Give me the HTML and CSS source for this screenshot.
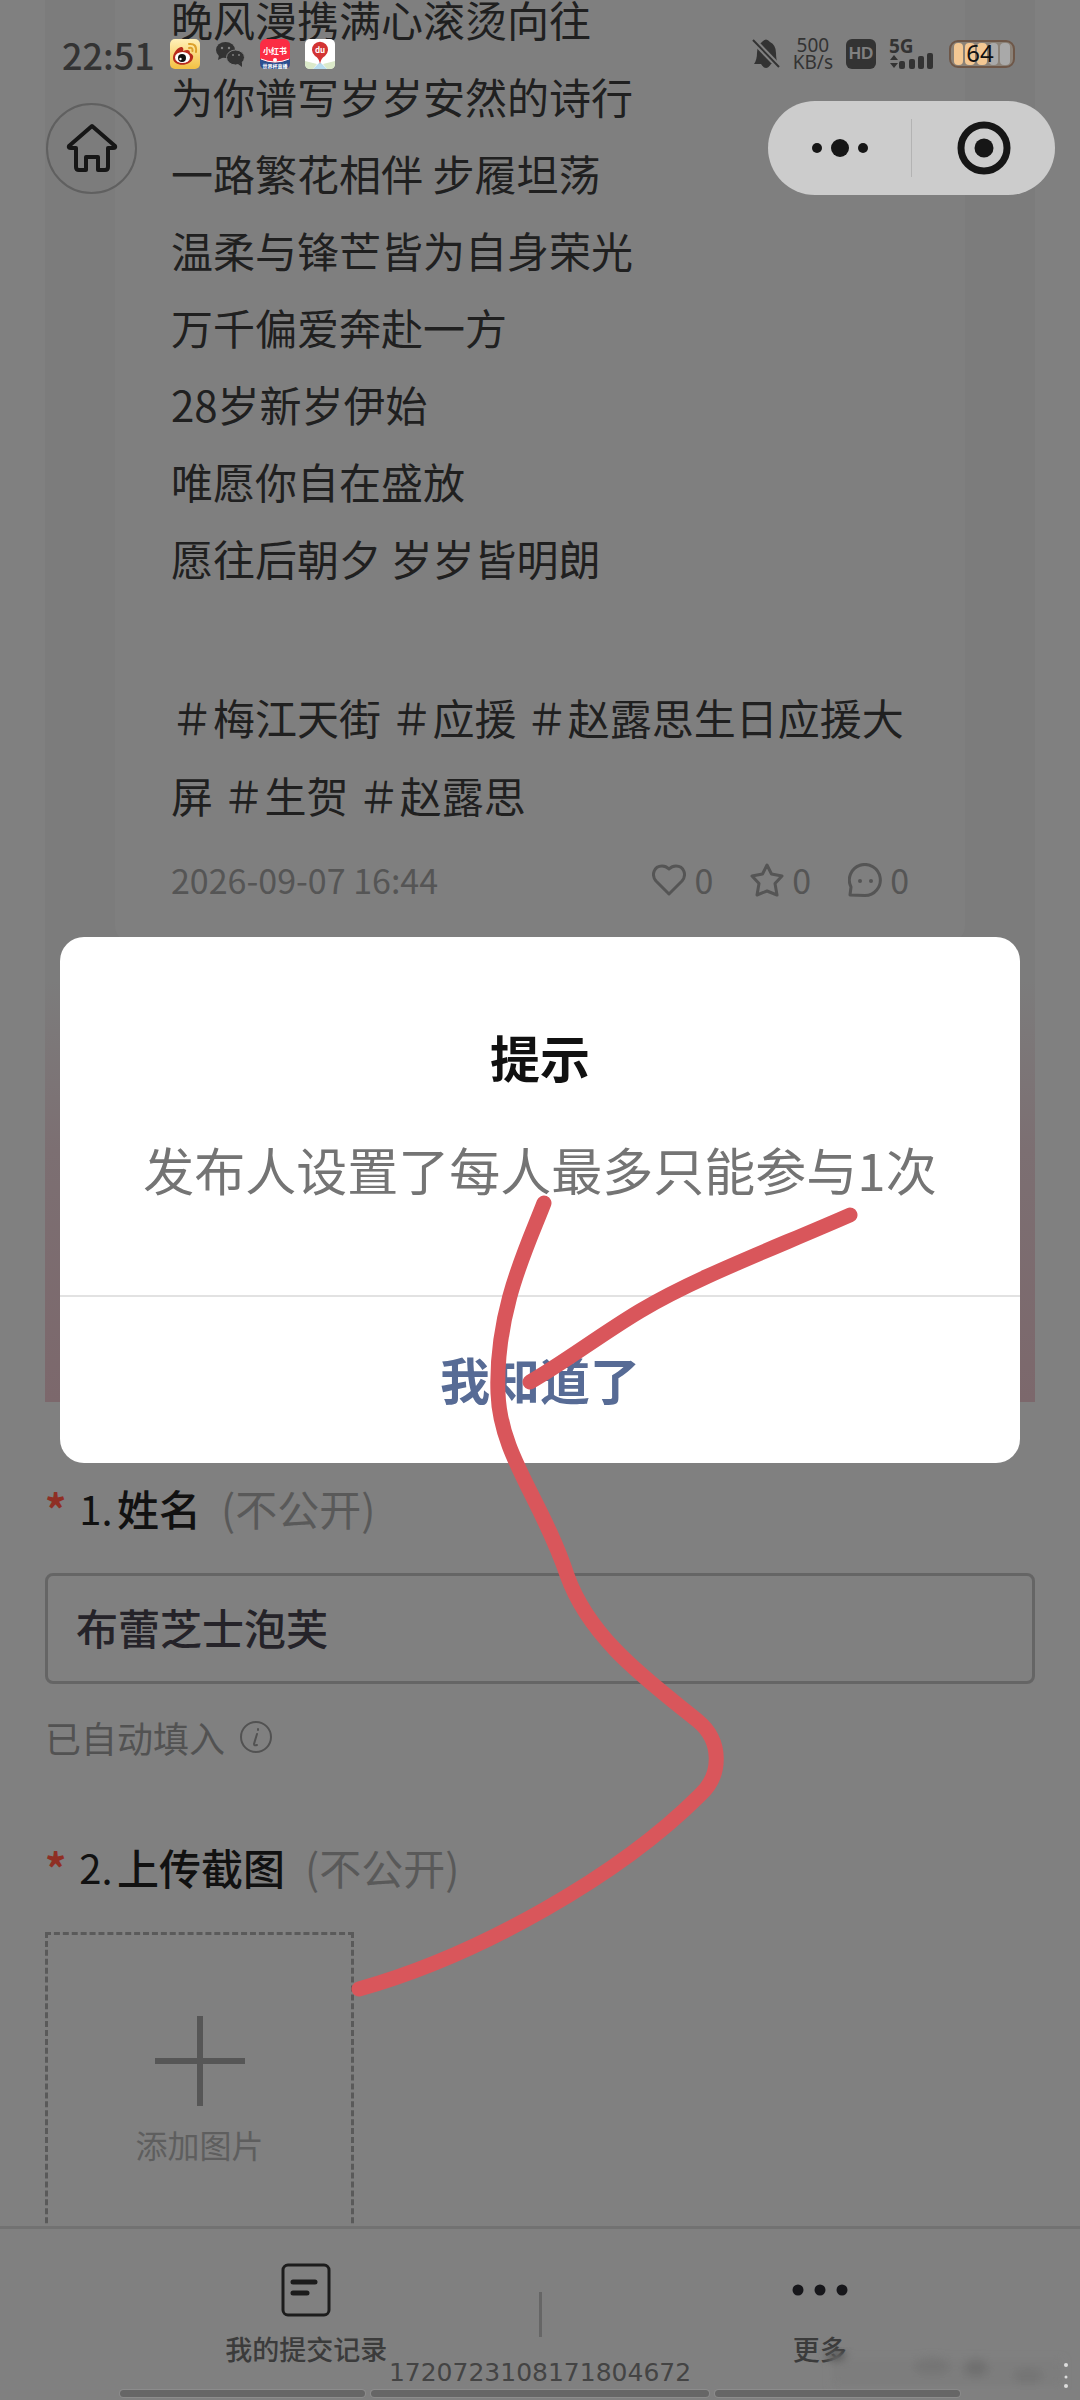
FILE: index.html
```html
<!DOCTYPE html>
<html lang="zh-CN">

<head>
    <meta charset="UTF-8">
    <meta name="viewport" content="width=device-width, initial-scale=1.0">
    <title>提示</title>
    <link rel="stylesheet" href="styles.css">
</head>

<body>
    <div class="pagina">
        <main class="contenido">
            <div class="portada">
                <article class="post">
                    <p class="poema">晚风漫携满心滚烫向往<br>为你谱写岁岁安然的诗行<br>一路繁花相伴 步履坦荡<br>温柔与锋芒皆为自身荣光<br>万千偏爱奔赴一方<br>28岁新岁伊始<br>唯愿你自在盛放<br>愿往后朝夕 岁岁皆明朗</p>
                    <p class="etiquetas">＃梅江天街 ＃应援 ＃赵露思生日应援大屏 ＃生贺 ＃赵露思</p>
                    <div class="meta">
                        <time>2026-09-07 16:44</time>
                        <div class="contadores">
                            <span class="contador">
                                <svg width="34" height="34" viewBox="0 0 34 34"><path d="M17 31 L4 18 C-1 12 2 3 10 3 C13 3 15 4 17 6 C19 4 21 3 24 3 C32 3 35 12 30 18 Z" /></svg>0
                            </span>
                            <span class="contador">
                                <svg width="34" height="34" viewBox="0 0 34 34"><path d="M17 2 L21.500 11 L32 13 L25 20.500 L27 32 L17 28 L7 32 L9 20.500 L2 13 L12.500 11 Z" /></svg>0
                            </span>
                            <span class="contador">
                                <svg width="34" height="34" viewBox="0 0 34 34"><path d="M2 32 L3 24 A15.500 15.500 0 1 1 17 32.500 Z" /><circle class="ojo" cx="12" cy="18" r="2" /><circle class="ojo" cx="23" cy="18" r="2" /></svg>0
                            </span>
                        </div>
                    </div>
                </article>
            </div>

            <form class="formulario">
                <label class="pregunta" for="nombre"><span class="obligatorio">*</span><span class="numero">1.</span><span class="titulo">姓名</span><span class="nota">(不公开)</span></label>
                <input class="campo" id="nombre" type="text" value="布蕾芝士泡芙">
                <div class="ayuda">已自动填入
                    <svg width="34" height="34" viewBox="0 0 34 34"><circle cx="17" cy="17" r="15" /><path d="M18 14 L15 24 Q15 26 18 25 M19 9 L19 10" /></svg>
                </div>
                <label class="pregunta" for="subir"><span class="obligatorio">*</span><span class="numero">2.</span><span class="titulo">上传截图</span><span class="nota">(不公开)</span></label>
                <button class="subir" id="subir" type="button">
                    <svg width="90" height="90" viewBox="0 0 90 90"><path d="M45 0 V90 M0 45 H90" /></svg>
                    添加图片
                </button>
            </form>
        </main>

        <nav class="barra">
            <a class="pestana" href="#registros">
                <svg width="50" height="54" viewBox="0 0 50 54"><rect x="2" y="2" width="46" height="50" rx="5" stroke-width="3" /><path d="M12 19 H34 M12 30 H26" stroke-width="5" /></svg>
                我的提交记录
            </a>
            <span class="separador"></span>
            <a class="pestana pestana-mas" href="#mas">
                <svg width="56" height="54" viewBox="0 0 56 54"><circle class="punto" cx="6" cy="27" r="5.500" /><circle class="punto" cx="28" cy="27" r="5.500" /><circle class="punto" cx="50" cy="27" r="5.500" /></svg>
                更多
            </a>
        </nav>
    </div>

    <!-- barra de estado del telefono -->
    <header class="estado">
        <div class="estado-grupo">
            <span class="hora">22:51</span>
            <svg width="30" height="30" viewBox="0 0 30 30">
                <defs><linearGradient id="oro" x1="0" y1="0" x2="0" y2="1"><stop offset="0" stop-color="#fff0b8" /><stop offset="1" stop-color="#f3c042" /></linearGradient></defs>
                <rect width="30" height="30" rx="5" fill="url(#oro)" />
                <path d="M3 19 C3 13 9 7 12 8 Q14 9 13 12 Q20 9 20 14 Q24 16 23 19 C21 28 3 28 3 19" fill="#b72a1c" />
                <ellipse cx="12.500" cy="18.500" rx="7.500" ry="5.500" fill="#fff" />
                <circle cx="12" cy="19" r="4" fill="#111" /><circle cx="10.500" cy="20" r="1.200" fill="#fff" />
                <path d="M19 5 Q27 4 26 13 M19 9 Q23 8 22.500 12" fill="none" stroke="#dda12c" stroke-width="2" stroke-linecap="round" />
            </svg>
            <svg width="30" height="30" viewBox="0 0 30 30">
                <ellipse cx="10.500" cy="11" rx="9.500" ry="8" fill="#333" /><path d="M4 16 L3 21 L9 18" fill="#333" />
                <ellipse cx="20.500" cy="18.500" rx="9" ry="7.500" fill="#333" stroke="#808080" /><path d="M23 25 L27 28 L27 23" fill="#333" />
                <g fill="#808080"><circle cx="7" cy="9" r="1.200" /><circle cx="14" cy="9" r="1.200" /><circle cx="18" cy="16" r="1" /><circle cx="24" cy="16" r="1" /></g>
            </svg>
            <svg width="30" height="30" viewBox="0 0 30 30">
                <rect width="30" height="30" rx="6" fill="#fb2c44" />
                <path d="M0 20 Q15 27 30 20 V24 Q30 30 24 30 H6 Q0 30 0 24 Z" fill="#2c4f8f" />
                <path d="M1 20 Q15 26 29 20" fill="none" stroke="#fff" /><circle cx="15" cy="21" r="2" fill="#fff" />
                <text x="15" y="15" class="logo-rojo">小红书</text>
                <text x="15" y="29" class="logo-azul">世界杯直播</text>
            </svg>
            <svg width="30" height="30" viewBox="0 0 30 30">
                <rect width="30" height="30" rx="5" fill="#fff" />
                <path d="M0 22 L12 25 L8 30 H5 Q0 30 0 25 Z M30 22 L18 25 L22 30 H25 Q30 30 30 25 Z" fill="#dbe9c9" /><path d="M8 30 L14 24 H16 L22 30 Z" fill="#b8dcef" />
                <path d="M15 25 Q14 19 10 17 A8 8 0 1 1 20 17 Q16 19 15 25" fill="#d33434" />
                <text x="15" y="14" class="logo-du">du</text>
            </svg>
        </div>
        <div class="estado-grupo estado-derecha">
            <svg width="28" height="32" viewBox="0 0 28 32"><path d="M2 26 Q5 22 5 15 Q5 7 10 4 Q14 -1 18 4 Q24 7 24 15 Q24 22 26 26 H19 Q14 34 9 26 Z" fill="#333" /><path d="M1 2 L27 29" stroke="#808080" stroke-width="6" /><path d="M1 2 L27 29" stroke="#333" stroke-width="2" /></svg>
            <span class="velocidad"><span>500</span><span>KB/s</span></span>
            <span class="hd">HD</span>
            <svg width="46" height="32" viewBox="0 0 46 32">
                <text x="0" y="15" class="red">5G</text>
                <path d="M1 22 L5 17 L9 22 Z M1 25 L5 30 L9 25 Z" fill="#333" />
                <g fill="#333"><rect x="10" y="23" width="6" height="8" rx="2" /><rect x="20" y="21" width="6" height="10" rx="2" /><rect x="29" y="18" width="6" height="13" rx="2" /><rect x="38" y="15" width="6" height="16" rx="2" /></g>
            </svg>
            <svg width="68" height="30" viewBox="0 0 68 30">
                <rect x="2" y="2" width="64" height="26" rx="8" fill="#8b8278" stroke="#6e5748" stroke-width="2" />
                <g fill="#f3c793"><rect x="6" y="4" width="9" height="22" rx="4" /><rect x="17" y="4" width="10" height="22" rx="4" /><rect x="29" y="4" width="10" height="22" rx="4" /></g>
                <g fill="#a9a9a9"><rect x="41" y="4" width="9" height="22" rx="4" /><rect x="52" y="4" width="10" height="22" rx="4" /></g>
                <text x="32" y="23" class="bateria">64</text>
            </svg>
        </div>
    </header>

    <div class="navegacion">
        <button class="inicio" type="button" aria-label="首页">
            <svg width="52" height="50" viewBox="0 0 52 50"><path d="M26 3 L3 23 Q2 25 5 25 H10 V44 Q10 47 13 47 H20 V34 H32 V47 H39 Q42 47 42 44 V25 H47 Q50 25 49 23 Z" /></svg>
        </button>
        <div class="capsula">
            <button type="button" aria-label="更多">
                <svg width="58" height="20" viewBox="0 0 58 20"><circle cx="6" cy="10" r="5" /><circle cx="29" cy="10" r="9" /><circle cx="52" cy="10" r="5" /></svg>
            </button>
            <span class="capsula-linea"></span>
            <button type="button" aria-label="关闭">
                <svg width="54" height="54" viewBox="0 0 54 54"><circle cx="27" cy="27" r="23" fill="none" stroke="#161616" stroke-width="7" /><circle cx="27" cy="27" r="9.500" /></svg>
            </button>
        </div>
    </div>

    <div class="capa">
        <div class="dialogo" role="dialog" aria-labelledby="aviso">
            <div class="dialogo-cuerpo">
                <h2 id="aviso">提示</h2>
                <p>发布人设置了每人最多只能参与1次</p>
            </div>
            <button class="aceptar" type="button">我知道了</button>
        </div>
    </div>

    <footer class="sistema">
        <span class="codigo">1720723108171804672</span>
        <div class="gestos"><span></span><span class="gesto-medio"></span><span></span></div>
    </footer>

    <!-- trazos rojos y mancha de la esquina -->
    <svg class="trazos" viewBox="0 0 1080 2400">
        <defs><filter id="mancha"><feGaussianBlur stdDeviation="4" /></filter></defs>
        <path d="M544 1203 C528 1245 495 1310 498 1393 C500 1455 542 1500 567 1575 C590 1640 650 1682 698 1721 C722 1741 722 1775 700 1795 C620 1875 480 1955 359 1989" />
        <path d="M850 1215 C770 1250 695 1278 640 1311 C600 1335 565 1362 530 1382" />
        <g filter="url(#mancha)">
            <rect x="832" y="2360" width="230" height="26" fill="#7d7d7d" />
            <ellipse cx="836" cy="2356" rx="10" ry="5" fill="#565656" />
            <ellipse cx="932" cy="2366" rx="18" ry="8" fill="#747474" /><ellipse cx="976" cy="2368" rx="12" ry="9" fill="#707070" /><ellipse cx="1028" cy="2376" rx="14" ry="8" fill="#747474" />
        </g>
        <g fill="#ddd"><circle cx="1066" cy="2365" r="2" /><circle cx="1066" cy="2377" r="1.500" /><circle cx="1066" cy="2386" r="2" /></g>
    </svg>
</body>

</html>
```
FILE: styles.css
```css
* {
    box-sizing: border-box;
}

body {
    margin: 0;
    background-color: #808080;
    font-family: "Noto Sans CJK SC", sans-serif;
    color: #111;
    position: relative;
    height: 100vh;
    overflow: hidden;
}

p,
h2 {
    margin: 0;
}

button {
    font-family: inherit;
    border: none;
    background: none;
    padding: 0;
    cursor: pointer;
}

svg {
    display: block;
    flex: none;
}

.pagina {
    display: flex;
    flex-direction: column;
    height: 100vh;
}

.contenido {
    flex: 1;
    min-height: 0;
    overflow: hidden;
}

/* publicacion */
.portada {
    display: flow-root;
    margin: 0 45px;
    padding: 0 70px 460px;
    background: linear-gradient(#7c7c7c 0, #7c7c7c 980px, #7c6f72 1150px, #7c686c 100%);
}

/* la lista ya esta desplazada */
.post {
    margin-top: -20px;
    padding: 0 56px 40px;
    background-color: #7f7f7f;
    border-radius: 0 0 16px 16px;
    font-size: 42px;
    color: #202020;
}

.poema {
    line-height: 77px;
}

.etiquetas {
    margin-top: 82px;
    line-height: 78px;
}

.meta {
    display: flex;
    justify-content: space-between;
    align-items: center;
    margin-top: 24px;
    line-height: 44px;
    font-size: 34px;
    color: #555;
}

.contadores {
    display: flex;
    gap: 37px;
}

.contador {
    display: flex;
    align-items: center;
    gap: 8px;
}

.contador svg {
    fill: none;
    stroke: #555;
    stroke-width: 3;
    stroke-linejoin: round;
}

.contador .ojo {
    fill: #555;
    stroke: none;
}

/* formulario */
.formulario {
    padding: 0 45px;
}

.pregunta {
    display: flex;
    align-items: center;
    margin: 76px 0 35px;
    line-height: 60px;
    font-size: 42px;
}

.ayuda + .pregunta {
    margin-top: 75px;
}

.obligatorio {
    width: 30px;
    color: #8f2f24;
    font-weight: 700;
}

.numero {
    width: 42px;
    font-size: 40px;
    text-align: center;
}

.titulo {
    font-weight: 500;
}

.nota {
    margin-left: 20px;
    color: #595959;
}

.campo {
    display: block;
    width: 100%;
    height: 111px;
    padding: 0 28px 5px;
    border: 3px solid #656565;
    border-radius: 8px;
    background: none;
    font-family: inherit;
    font-size: 42px;
    font-weight: 500;
    color: #252329;
}

.ayuda {
    display: flex;
    align-items: center;
    gap: 14px;
    margin-top: 28px;
    line-height: 50px;
    font-size: 36px;
    color: #525252;
}

.ayuda svg {
    fill: none;
    stroke: #525252;
    stroke-width: 2;
    stroke-linecap: round;
}

.subir {
    display: flex;
    flex-direction: column;
    align-items: center;
    gap: 16px;
    width: 309px;
    height: 309px;
    padding-top: 81px;
    border: 3px dashed #5a5a5a;
    line-height: 44px;
    font-size: 32px;
    color: #5e5e5e;
}

.subir svg {
    stroke: #565656;
    stroke-width: 6;
}

/* barra inferior */
.barra {
    display: grid;
    grid-template-columns: 1fr 3px 1fr;
    height: 174px;
    border-top: 3px solid #727272;
    background-color: #808080;
}

.pestana {
    display: flex;
    flex-direction: column;
    align-items: center;
    gap: 12px;
    padding: 34px 0 0 74px;
    line-height: 40px;
    font-size: 27px;
    font-weight: 500;
    color: #3b3b3b;
    text-decoration: none;
}

.pestana svg {
    fill: none;
    stroke: #1c1c1c;
    stroke-linecap: round;
}

.pestana .punto {
    fill: #17171b;
    stroke: none;
}

.pestana-mas {
    padding-left: 18px;
}

.separador {
    height: 45px;
    margin-top: 63px;
    background-color: #666;
}

/* barra de estado */
.estado {
    position: absolute;
    top: 34px;
    left: 0;
    right: 0;
    display: flex;
    justify-content: space-between;
    align-items: center;
    height: 40px;
    padding: 0 64px 0 62px;
    color: #333;
}

.estado-grupo {
    display: flex;
    align-items: center;
    gap: 15px;
}

.estado-derecha {
    gap: 13px;
}

.hora {
    font-size: 36px;
    font-weight: 500;
    line-height: 40px;
}

.velocidad {
    display: flex;
    flex-direction: column;
    align-items: center;
    font-family: "Noto Sans", sans-serif;
    font-size: 19px;
    line-height: 17px;
}

.hd {
    width: 30px;
    border-radius: 6px;
    background-color: #333;
    color: #808080;
    font: 700 17px/30px "Liberation Sans", sans-serif;
    text-align: center;
}

.red {
    font: 700 19px "Noto Sans", sans-serif;
    fill: #333;
}

.bateria {
    font: 24px "Noto Sans", sans-serif;
    text-anchor: middle;
    fill: #111;
}

.logo-rojo,
.logo-azul,
.logo-du {
    font-size: 8px;
    font-weight: 700;
    text-anchor: middle;
    fill: #fff;
}

.logo-azul {
    font-size: 5px;
}

/* inicio y capsula */
.navegacion {
    position: absolute;
    top: 101px;
    left: 0;
    right: 0;
    display: flex;
    justify-content: space-between;
    align-items: center;
    padding: 0 25px 0 46px;
}

.inicio {
    display: flex;
    justify-content: center;
    align-items: center;
    width: 91px;
    height: 91px;
    border: 2px solid #606060;
    border-radius: 50%;
}

.inicio svg {
    fill: none;
    stroke: #161616;
    stroke-width: 4;
    stroke-linejoin: round;
}

.capsula {
    display: flex;
    align-items: center;
    width: 287px;
    height: 94px;
    border-radius: 47px;
    background-color: #ccc;
}

.capsula button {
    flex: 1;
    display: flex;
    justify-content: center;
}

.capsula svg {
    fill: #161616;
}

.capsula-linea {
    width: 1px;
    height: 58px;
    background-color: #b3b3b3;
}

/* dialogo */
.capa {
    position: absolute;
    inset: 0;
    display: flex;
    align-items: center;
    padding: 0 60px;
}

.dialogo {
    width: 100%;
    border-radius: 24px;
    background-color: #fff;
    text-align: center;
    overflow: hidden;
}

.dialogo-cuerpo {
    padding: 84px 40px 89px;
    border-bottom: 2px solid #e2e2e2;
}

.dialogo h2 {
    line-height: 70px;
    font-size: 50px;
    font-weight: 700;
}

.dialogo p {
    margin-top: 41px;
    line-height: 74px;
    font-size: 51px;
    color: #747474;
}

.aceptar {
    width: 100%;
    height: 166px;
    padding-bottom: 5px;
    font-size: 50px;
    font-weight: 700;
    color: #576b95;
}

/* pie del sistema */
.sistema {
    position: absolute;
    bottom: 3px;
    left: 0;
    right: 0;
    display: flex;
    flex-direction: column;
    align-items: center;
    gap: 2px;
}

.codigo {
    font-family: "DejaVu Sans", sans-serif;
    font-size: 25px;
    line-height: 30px;
    color: #444;
}

.gestos {
    display: flex;
    gap: 6px;
    width: 100%;
    padding: 0 120px;
}

.gestos span {
    flex: 245;
    height: 7px;
    border-radius: 4px;
    background-color: #666;
    box-shadow: 0 0 0 1px #8c8c8c;
}

.gestos .gesto-medio {
    flex: 338;
}

.trazos {
    position: absolute;
    top: 0;
    left: 0;
    width: 100%;
    pointer-events: none;
}

.trazos path {
    fill: none;
    stroke: #d9565b;
    stroke-width: 15;
    stroke-linecap: round;
}
```
